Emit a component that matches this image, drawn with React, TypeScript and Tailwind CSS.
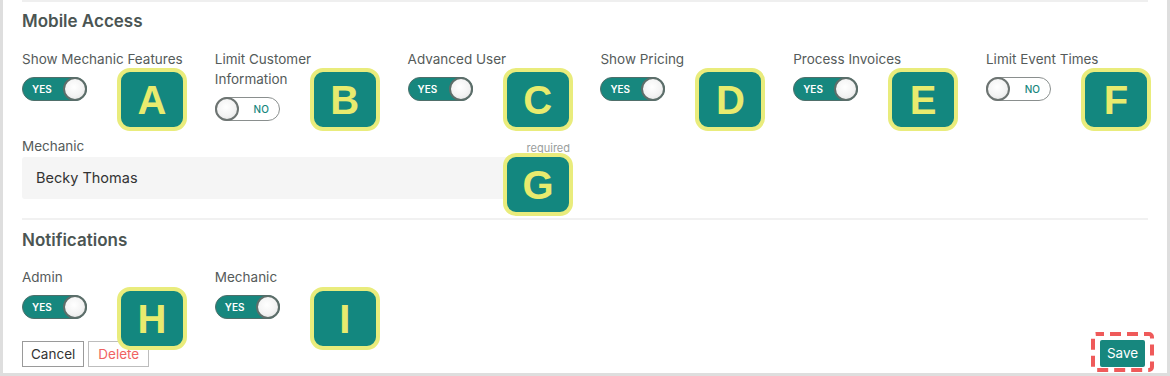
import React from "react";

const font = { fontFamily: "Inter, 'Noto Sans', sans-serif" };

function Toggle({ on }: { on: boolean }) {
  if (on) {
    return (
      <div className="relative h-[24px] w-[65px] rounded-full bg-[#17877e] border border-[#4f6f6a]">
        <span className="absolute left-[9px] top-[5px] text-[10px] font-semibold leading-[12px] text-white">YES</span>
        <span className="absolute right-[-1px] top-[-1px] h-[24px] w-[24px] rounded-full border-[2px] border-[#5d6e6a] bg-[radial-gradient(circle_at_45%_40%,#ffffff_0%,#f3f3f3_55%,#dedede_100%)]" />
      </div>
    );
  }
  return (
    <div className="relative h-[24px] w-[65px] rounded-full bg-white border border-[#8a8f8e]">
      <span className="absolute right-[10px] top-[5px] text-[10px] font-medium leading-[12px] text-[#17877e]">NO</span>
      <span className="absolute left-[-1px] top-[-1px] h-[24px] w-[24px] rounded-full border-[2px] border-[#6d7472] bg-[radial-gradient(circle_at_45%_40%,#ffffff_0%,#f3f3f3_55%,#dedede_100%)]" />
    </div>
  );
}

function Badge({ letter, className }: { letter: string; className: string }) {
  return (
    <div
      className={`absolute flex h-[63px] w-[70px] items-center justify-center rounded-[13px] border-[4px] border-[#e9ec7c] bg-[#13877f] ${className}`}
    >
      <span className="text-[40px] font-bold leading-none text-[#e8eb6e]" style={{ fontFamily: "'Liberation Sans', Arial, sans-serif" }}>
        {letter}
      </span>
    </div>
  );
}

function Field({ label, on, letter, badgeTop }: { label: React.ReactNode; on: boolean; letter: string; badgeTop: string }) {
  return (
    <div className="relative">
      <div className="text-[13.5px] leading-[20px] text-[#555b5a]">{label}</div>
      <div className="mt-[8px]">
        <Toggle on={on} />
      </div>
      <Badge letter={letter} className={`left-[95px] ${badgeTop}`} />
    </div>
  );
}

export default function App() {
  return (
    <div style={font} className="relative h-[376px] w-[1170px] overflow-hidden bg-white border-l-[3px] border-r-[3px] border-b-[3px] border-[#dedede]">
      <div className="px-[19px]">
        <div className="h-[2px] bg-[#efefef]" />
        <h2 className="mt-[9px] text-[17px] font-semibold leading-[20px] text-[#4b5553]">Mobile Access</h2>
        <div className="mt-[18px] grid grid-cols-[repeat(6,192.8px)]">
          <Field label="Show Mechanic Features" on letter="A" badgeTop="top-[19px]" />
          <Field
            label={
              <>
                Limit Customer
                <br />
                Information
              </>
            }
            on={false}
            letter="B"
            badgeTop="top-[19px]"
          />
          <Field label="Advanced User" on letter="C" badgeTop="top-[19px]" />
          <Field label="Show Pricing" on letter="D" badgeTop="top-[19px]" />
          <Field label="Process Invoices" on letter="E" badgeTop="top-[19px]" />
          <Field label="Limit Event Times" on={false} letter="F" badgeTop="top-[19px]" />
        </div>
        <div className="relative mt-[15px] w-[548px]">
          <div className="flex items-end justify-between">
            <span className="text-[13.5px] leading-[20px] text-[#555b5a]">Mechanic</span>
            <span className="text-[11px] leading-[16px] text-[#9a9e9d]">required</span>
          </div>
          <div className="mt-[1px] flex h-[42px] items-center rounded-[3px] bg-[#f5f5f5] px-[14px] text-[14.5px] text-[#333]">
            Becky Thomas
          </div>
          <Badge letter="G" className="left-[481px] top-[17px]" />
        </div>
        <div className="mt-[19px] h-[2px] bg-[#f1f1f1]" />
        <h2 className="mt-[10px] text-[17px] font-semibold leading-[20px] text-[#4b5553]">Notifications</h2>
        <div className="mt-[17px] grid grid-cols-[repeat(6,192.8px)]">
          <Field label="Admin" on letter="H" badgeTop="top-[20px]" />
          <Field label="Mechanic" on letter="I" badgeTop="top-[20px]" />
        </div>
        <div className="mt-[22px] flex items-center gap-[4px]">
          <button className="h-[26px] border border-[#9a9a9a] bg-white px-[8px] text-[13.5px] text-[#333]">Cancel</button>
          <button className="h-[26px] border border-[#bdbdbd] bg-white px-[9px] text-[13.5px] text-[#f06262]">Delete</button>
        </div>
      </div>
      <div className="absolute right-[13px] top-[332px] h-[40px] w-[63px]">
        <svg className="absolute inset-0" width="63" height="40" viewBox="0 0 63 40">
          <rect x="2" y="2" width="59" height="36" rx="3" fill="none" stroke="#ef5a5a" strokeWidth="4" strokeDasharray="11 6" strokeDashoffset="3" />
        </svg>
        <button className="absolute left-[9px] top-[8px] h-[27px] w-[45px] rounded-[2px] bg-[#17877e] text-[13.5px] text-white">Save</button>
      </div>
    </div>
  );
}
